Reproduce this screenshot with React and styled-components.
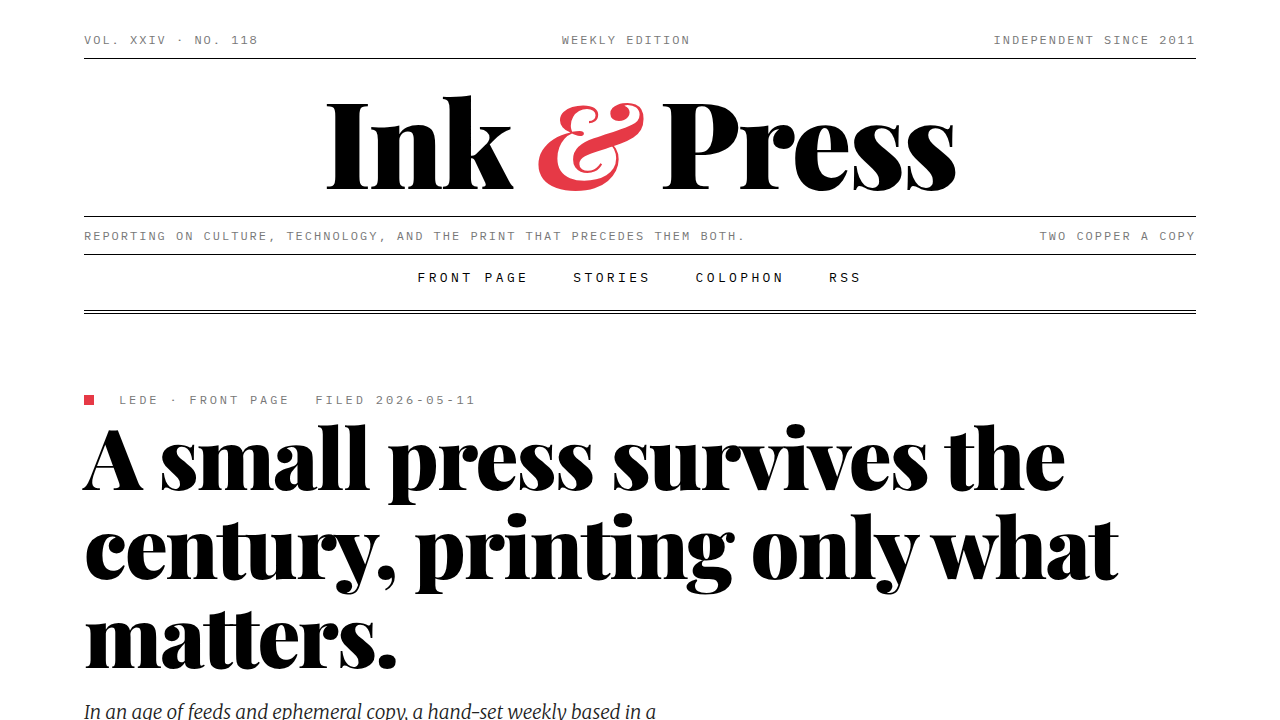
import React from 'react';
import styled, { createGlobalStyle } from 'styled-components';

const display = '"Playfair Display", "Liberation Serif", serif';
const serif = 'Merriweather, "Liberation Serif", serif';
const mono = '"IBM Plex Mono", "Liberation Mono", monospace';

const GlobalStyle = createGlobalStyle`
    * {
        box-sizing: border-box;
    }

    body {
        margin: 0;
        background: #fff;
        color: #000;
        font-family: ${serif};
    }
`

const Page = styled.div`
    max-width: 1280px;
    margin: 0 auto;
    padding: 32px 84px 0;
`

const Masthead = styled.header`
    border-bottom: 4px double #000;
`

const Strip = styled.div`
    display: flex;
    justify-content: space-between;
    gap: 24px;
    padding: ${props => props.$top || '0'} 0 10px;
    border-bottom: 1px solid #000;
    color: #777;
    font-family: ${mono};
    font-size: 12px;
    line-height: 16px;
    letter-spacing: 2px;
    text-transform: uppercase;
`

const Title = styled.h1`
    margin: 0;
    padding: 26px 0 21px;
    border-bottom: 1px solid #000;
    font-family: ${display};
    font-size: 119px;
    font-weight: 900;
    line-height: 110px;
    letter-spacing: -0.02em;
    text-align: center;
`

const Ampersand = styled.em`
    color: #e63946;
    font-style: italic;
    font-weight: 700;
`

const Nav = styled.nav`
    display: flex;
    flex-wrap: wrap;
    justify-content: center;
    gap: 12px 44px;
    padding: 15px 0 24px;
`

const NavLink = styled.a`
    color: #000;
    font-family: ${mono};
    font-size: 13px;
    line-height: 16px;
    letter-spacing: 0.26em;
    text-decoration: none;
    text-transform: uppercase;
`

const Lede = styled.article`
    padding-top: 78px;
`

const Kicker = styled.div`
    display: flex;
    align-items: center;
    gap: 25px;
    color: #777;
    font-family: ${mono};
    font-size: 12px;
    line-height: 16px;
    letter-spacing: 0.24em;
    text-transform: uppercase;
`

const Marker = styled.span`
    width: 10px;
    height: 10px;
    background: #e63946;
`

const Headline = styled.h2`
    margin: 2px 0 19px;
    font-family: ${display};
    font-size: 85px;
    font-weight: 900;
    line-height: 89px;
    letter-spacing: -0.02em;
`

const Deck = styled.p`
    max-width: 640px;
    margin: 0;
    color: #222;
    font-size: 19px;
    font-style: italic;
    font-weight: 300;
    line-height: 32px;
`

const links = ['Front Page', 'Stories', 'Colophon', 'RSS'];

export default function App() {
    return (
        <>
            <GlobalStyle />
            <Page>
                <Masthead>
                    <Strip>
                        <span>Vol. XXIV · No. 118</span>
                        <span>Weekly Edition</span>
                        <span>Independent since 2011</span>
                    </Strip>
                    <Title>
                        Ink <Ampersand>&amp;</Ampersand> Press
                    </Title>
                    <Strip $top="11px">
                        <span>Reporting on culture, technology, and the print that precedes them both.</span>
                        <span>Two copper a copy</span>
                    </Strip>
                    <Nav>
                        {links.map(link => (
                            <NavLink key={link} href="#">{link}</NavLink>
                        ))}
                    </Nav>
                </Masthead>
                <main>
                    <Lede>
                        <Kicker>
                            <Marker />
                            <span>Lede · Front Page</span>
                            <time dateTime="2026-05-11">Filed 2026-05-11</time>
                        </Kicker>
                        <Headline>
                            A small press survives the century, printing only what matters.
                        </Headline>
                        <Deck>
                            In an age of feeds and ephemeral copy, a hand-set weekly based in a
                        </Deck>
                    </Lede>
                </main>
            </Page>
        </>
    );
}
